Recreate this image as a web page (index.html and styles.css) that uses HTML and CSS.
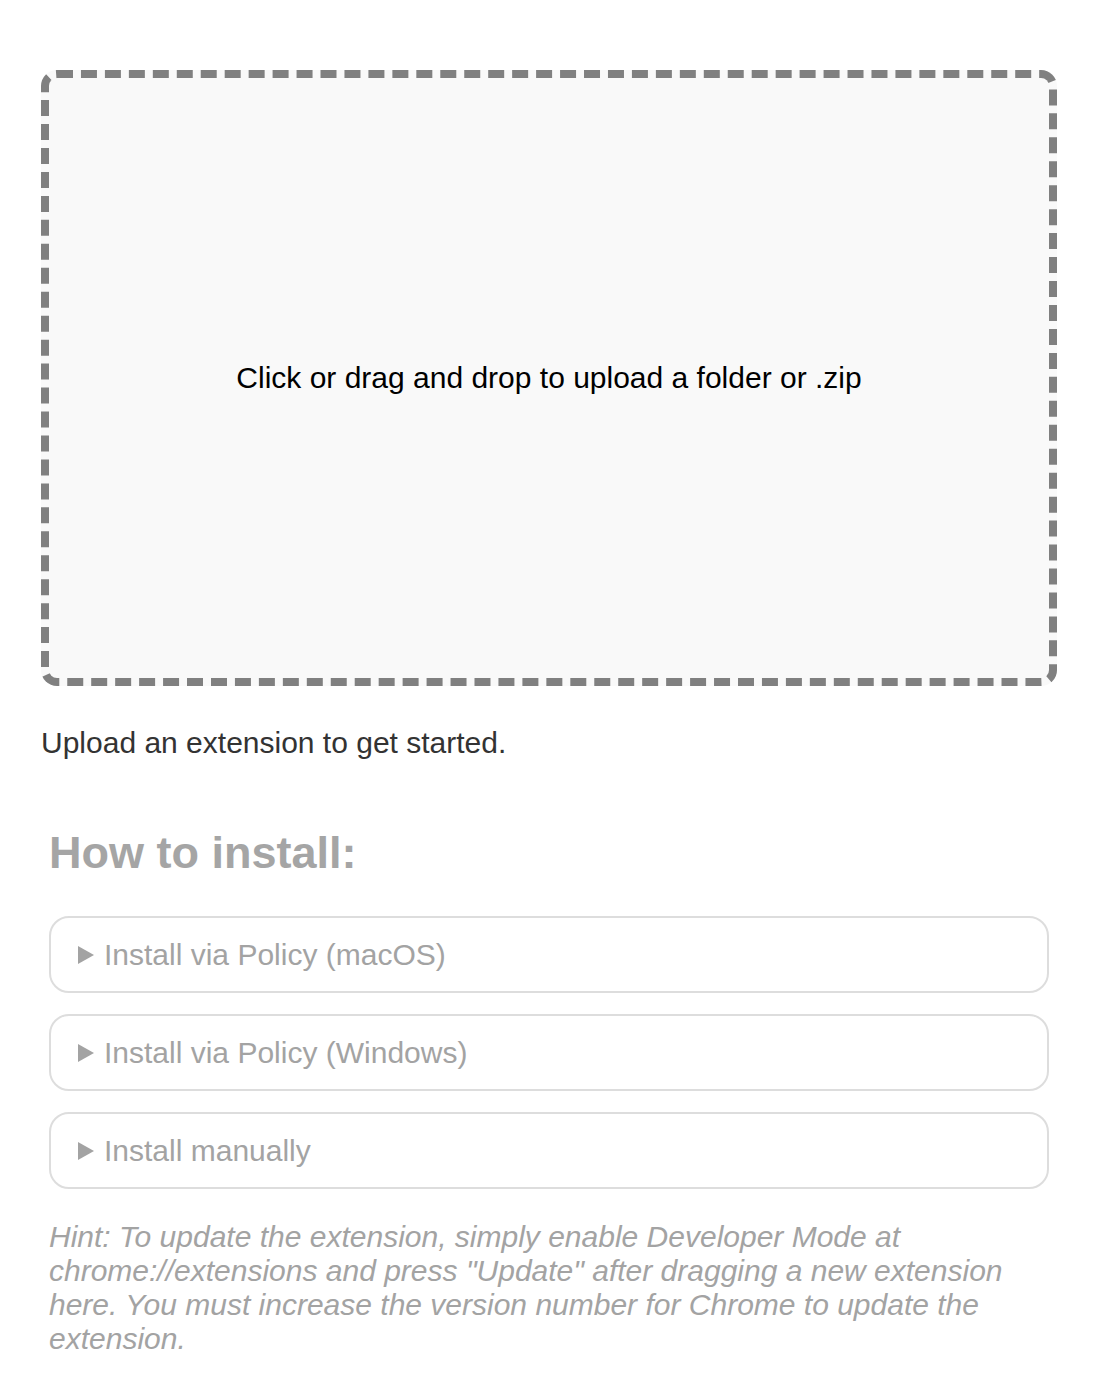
FILE: index.html
```html
<!DOCTYPE html>
<html lang="en">
<head>
<meta charset="utf-8">
<title>Upload extension</title>
<link rel="stylesheet" href="styles.css">
</head>
<body>
<main class="page">
  <div class="dropzone">Click or drag and drop to upload a folder or .zip</div>
  <p class="status">Upload an extension to get started.</p>
  <section class="install">
    <h2 class="install-title">How to install:</h2>
    <details class="step"><summary class="step-summary">Install via Policy (macOS)</summary></details>
    <details class="step"><summary class="step-summary">Install via Policy (Windows)</summary></details>
    <details class="step"><summary class="step-summary">Install manually</summary></details>
    <p class="hint">Hint: To update the extension, simply enable Developer Mode at chrome://extensions and press "Update" after dragging a new extension here. You must increase the version number for Chrome to update the extension.</p>
  </section>
</main>
</body>
</html>
```

FILE: styles.css
```css
html, body {
  margin: 0;
  background: #ffffff;
}

body {
  font-family: "Liberation Sans", Arial, Helvetica, sans-serif;
  font-size: 30px;
  line-height: normal;
  color: #333333;
}

.page {
  width: 1016px;
  padding: 70px 0 0 41px;
}

.dropzone {
  box-sizing: border-box;
  height: 616px;
  border: 8px dashed #808080;
  border-radius: 16px;
  background: #f9f9f9;
  color: #000000;
  display: flex;
  align-items: center;
  justify-content: center;
}

.status {
  margin: 40px 0 0;
  color: #333333;
}

.install {
  margin-top: 67px;
  padding: 0 8px;
  color: #a3a3a3;
}

.install-title {
  margin: 0 0 37px;
  font-size: 45px;
  font-weight: bold;
  color: #a5a5a5;
}

.step {
  border: 2px solid #dddddd;
  border-radius: 20px;
  margin-bottom: 21px;
}

.step-summary {
  display: flex;
  align-items: center;
  gap: 10px;
  padding: 19px 26px;
  line-height: 35px;
  list-style: none;
  cursor: pointer;
}

.step-summary::-webkit-details-marker {
  display: none;
}

.step-summary::before {
  content: "";
  width: 0;
  height: 0;
  border-top: 9.5px solid transparent;
  border-bottom: 9.5px solid transparent;
  border-left: 16px solid #a3a3a3;
  margin-left: 1px;
}

.hint {
  margin: 31px 0 0;
  font-style: italic;
  color: #a3a3a3;
}
```
